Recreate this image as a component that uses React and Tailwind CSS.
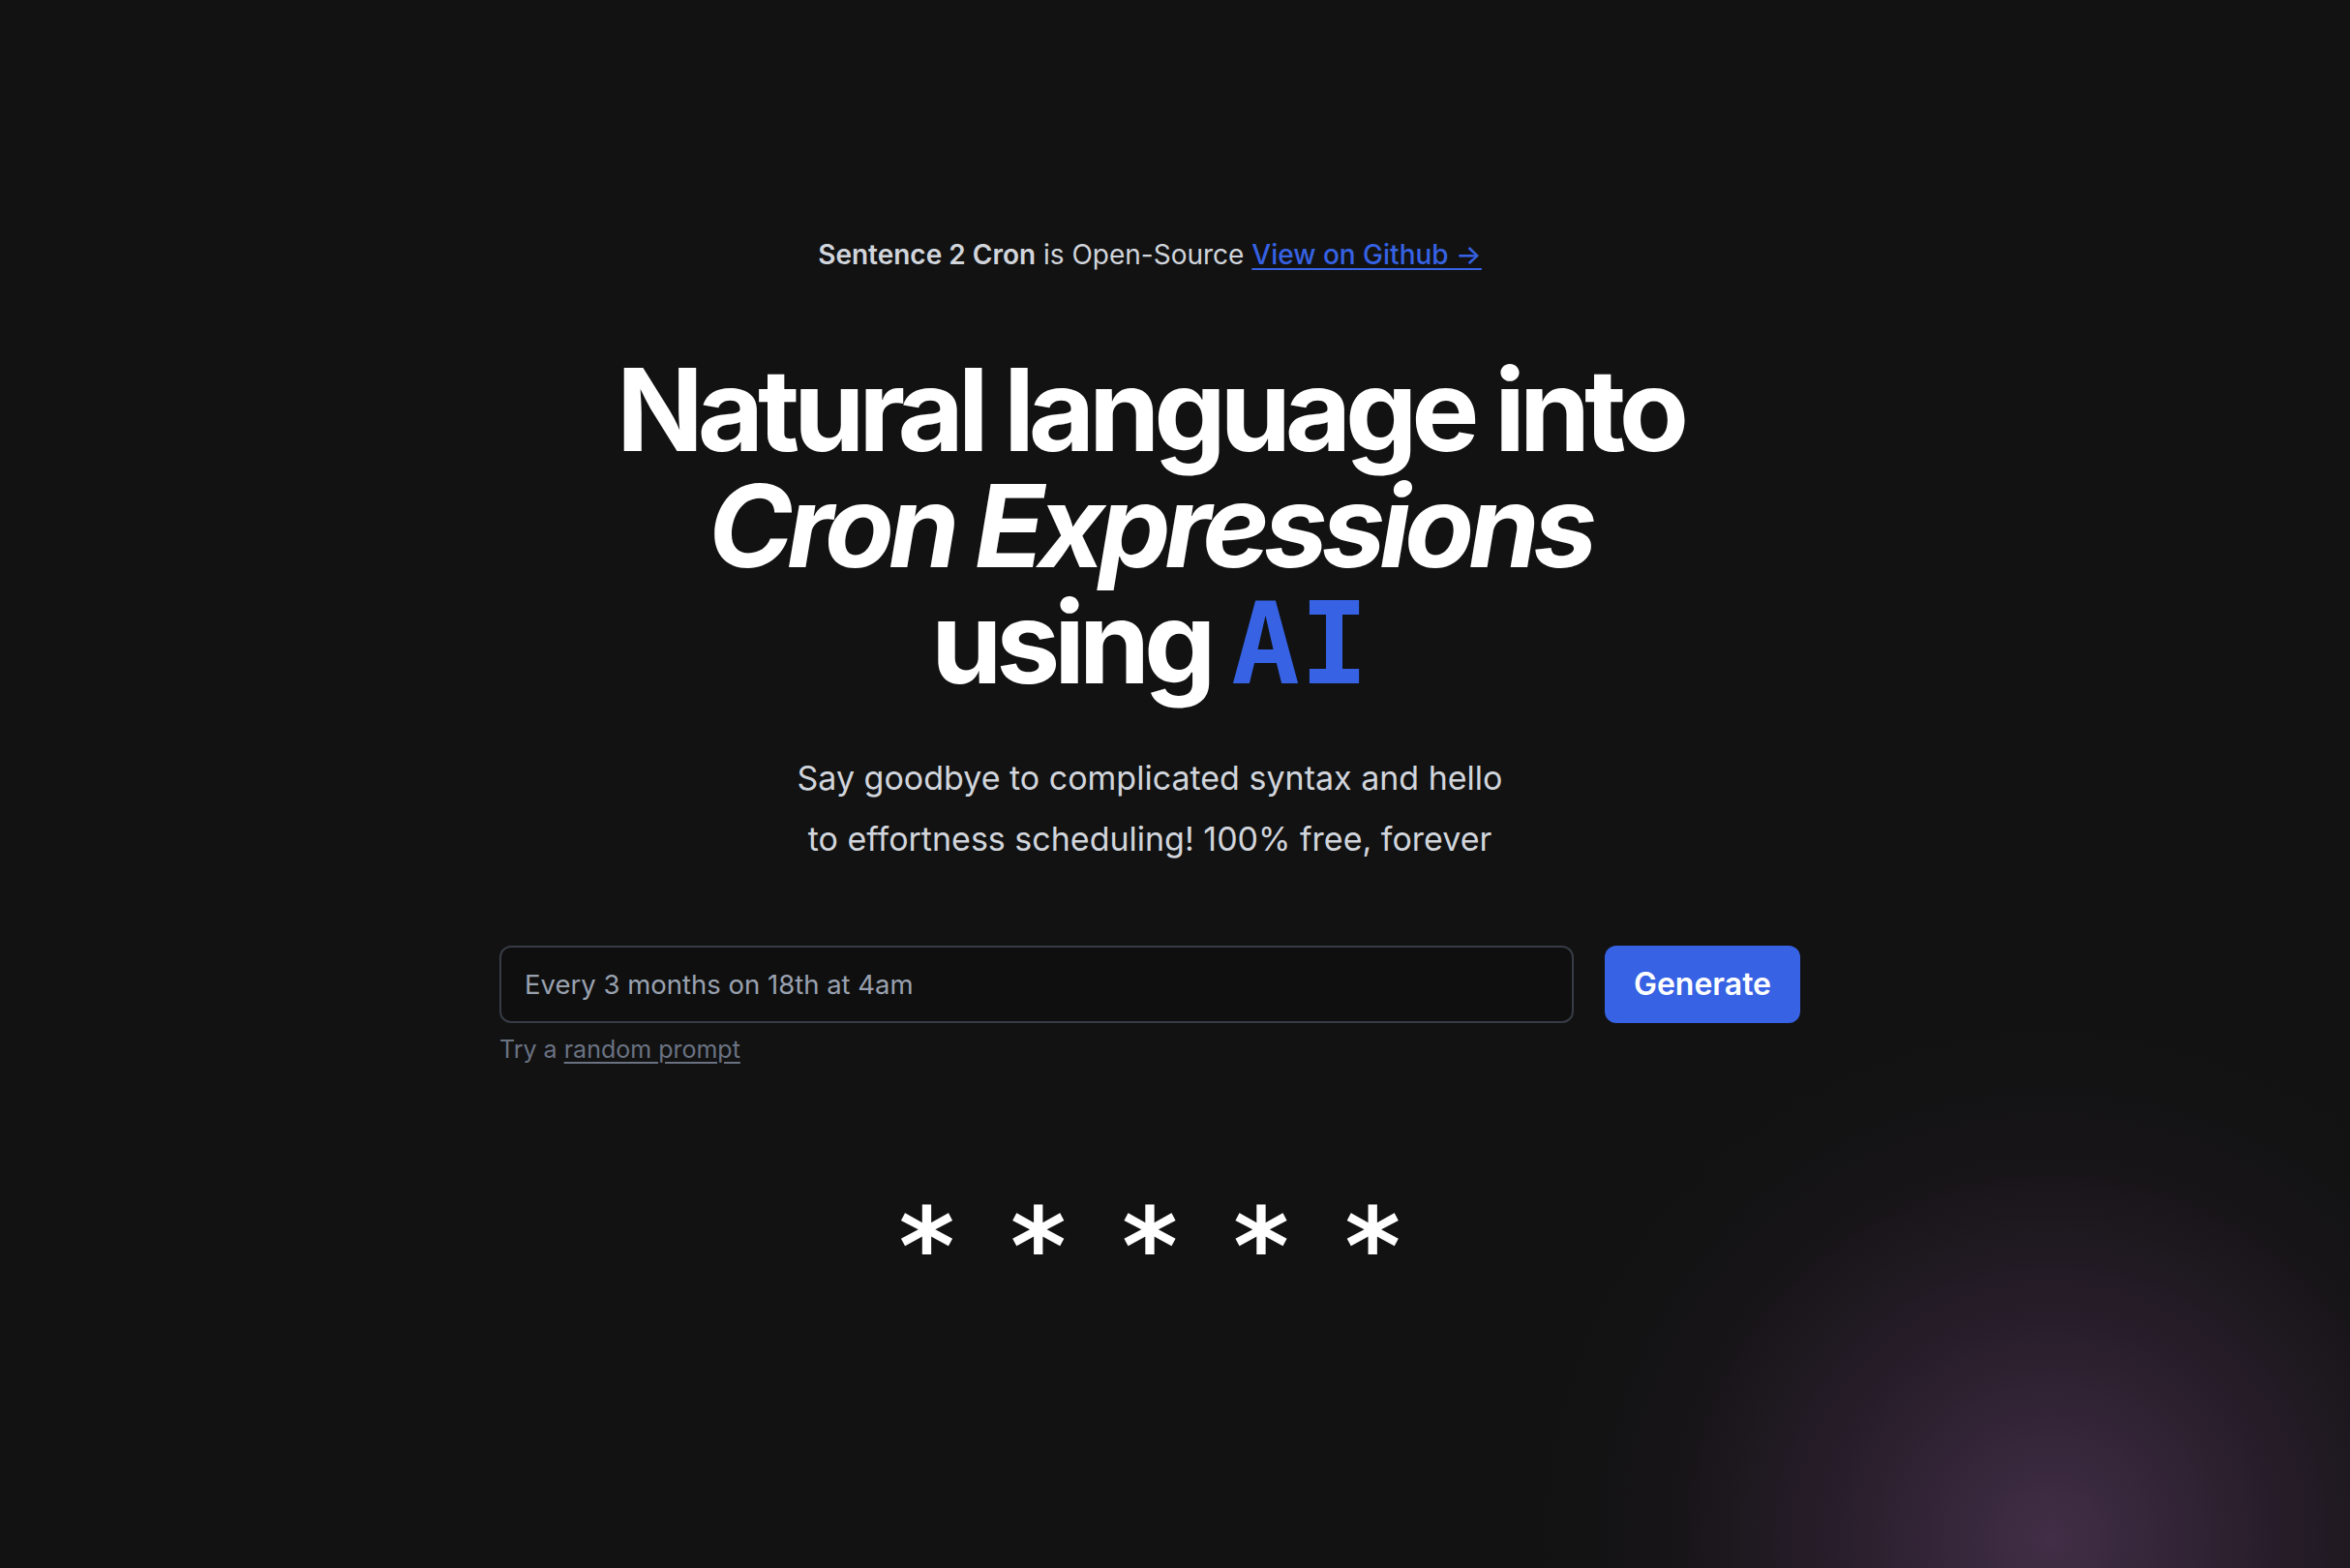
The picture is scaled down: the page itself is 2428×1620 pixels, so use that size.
export default function App() {
  return (
    <main
      className="relative min-h-screen w-full overflow-hidden bg-[#121212]"
      style={{ fontFamily: 'Inter, "Noto Sans", sans-serif' }}
    >
      <div className="pointer-events-none absolute bottom-[-520px] right-[-240px] h-[1100px] w-[1100px] rounded-[50%] bg-[radial-gradient(ellipse_at_center,_rgba(68,48,74,0.95)_0%,_rgba(52,36,56,0.62)_30%,_rgba(30,24,32,0.3)_52%,_rgba(18,18,18,0)_70%)]" />
      <div className="relative flex flex-col items-center pr-[52px] pt-[243px]">
        <p className="text-[28px] leading-[40px] text-gray-300">
          <span className="font-semibold">Sentence 2 Cron</span> is Open-Source{' '}
          <a href="#" className="font-medium text-[#3662e3] underline underline-offset-4">
            View on Github →
          </a>
        </p>

        <h1 className="mt-[80px] text-center text-[118px] font-bold leading-[120px] tracking-[-0.053em] text-white">
          Natural language into
          <br />
          <span className="italic">Cron Expressions</span>
          <br />
          using{' '}
          <span
            className="tracking-normal text-[#3662e3]"
            style={{ fontFamily: '"DejaVu Sans Mono", "Liberation Mono", monospace' }}
          >
            AI
          </span>
        </h1>

        <p className="mt-[47px] text-center text-[34px] leading-[63px] text-gray-300">
          Say goodbye to complicated syntax and hello
          <br />
          to effortness scheduling! 100% free, forever
        </p>

        <div className="mt-[79px] w-[1344px]">
          <div className="flex gap-8">
            <input
              type="text"
              placeholder="Every 3 months on 18th at 4am"
              className="h-[80px] flex-1 rounded-xl border-2 border-[#363b45] bg-[#0f0f0f] px-6 text-[27.5px] text-gray-200 placeholder:text-gray-400 outline-none"
            />
            <button className="h-[80px] w-[202px] rounded-xl bg-[#3662e3] text-[32px] font-semibold text-white">
              Generate
            </button>
          </div>
          <p className="mt-[11px] text-[25px] leading-[32px] text-gray-500">
            Try a{' '}
            <a href="#" className="underline underline-offset-4">
              random prompt
            </a>
          </p>
        </div>

        <div
          className="mt-[134px] flex gap-[49px] text-[110px] font-bold leading-none text-white"
          style={{ fontFamily: '"DejaVu Sans Mono", "Liberation Mono", monospace' }}
        >
          <span>*</span>
          <span>*</span>
          <span>*</span>
          <span>*</span>
          <span>*</span>
        </div>
      </div>
    </main>
  )
}
